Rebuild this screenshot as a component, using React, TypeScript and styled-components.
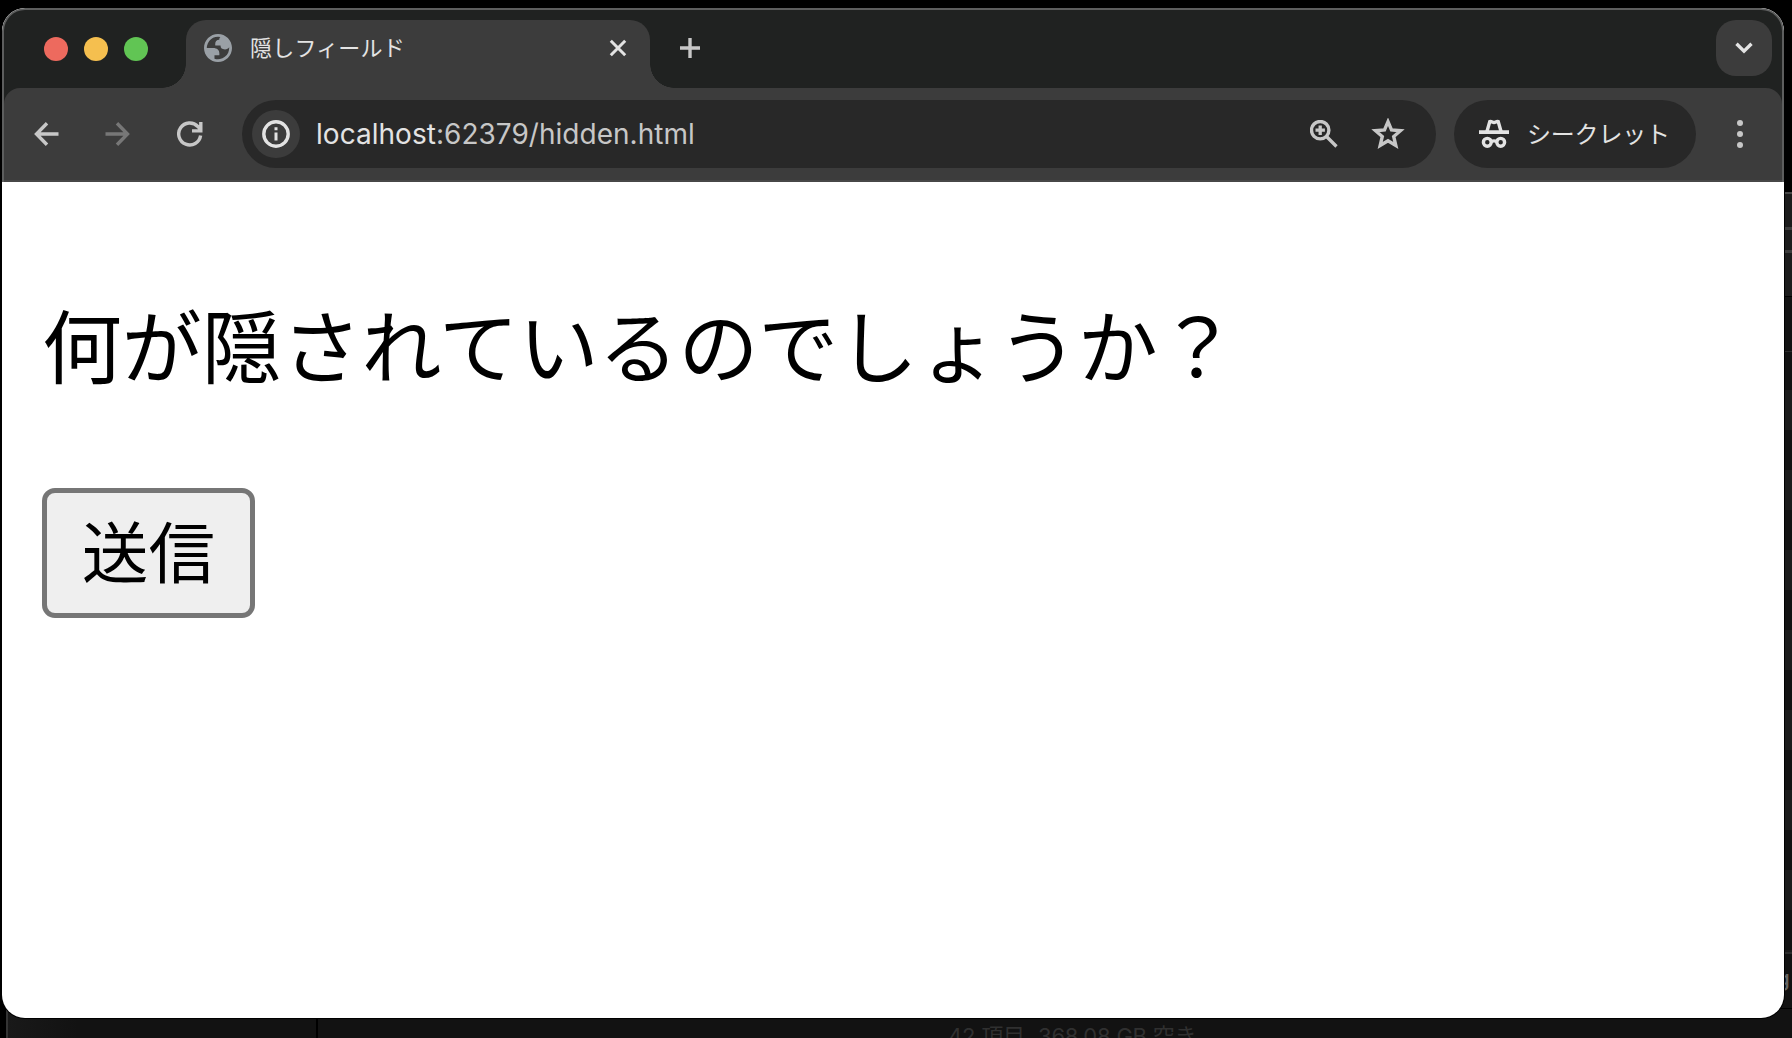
import React from 'react';
import styled, { createGlobalStyle } from 'styled-components';

const jp = `"Noto Sans CJK JP", sans-serif`;

const GlobalStyle = createGlobalStyle`
  * { box-sizing: border-box; }
  body { margin: 0; background: #000; overflow: hidden; }
`;

const Desktop = styled.div`
  position: relative;
  width: 1792px;
  height: 1038px;
  overflow: hidden;
  background: #000;
`;

/* Finder window that peeks out behind the browser */
const FinderWindow = styled.section`
  position: absolute;
  left: 6px;
  top: 192px;
  width: 1800px;
  height: 860px;
  display: grid;
  grid-template-columns: 310px 1fr;
  border-left: 2px solid #343434;
  border-top: 2px solid #474747;
  background: #121212;
`;

const FinderSidebar = styled.div`
  border-right: 2px solid #000;
  background: linear-gradient(90deg, #191919, #121212 70px);
`;

const FinderMain = styled.div`
  display: flex;
  flex-direction: column;
`;

const FinderToolbar = styled.div`
  height: 103px;
  background: #1b1b1b;
  border-bottom: 1px solid #000;
  display: flex;
  justify-content: flex-end;
  padding-top: 33px;
`;

const FinderSearch = styled.div`
  width: 60px;
  height: 26px;
  border: 3px solid #3b3b3b;
  border-width: 3px 0;
`;

const FinderHeader = styled.div`
  height: 55px;
  border-bottom: 1px solid #2c2c2c;
`;

const FinderRows = styled.div`
  height: 600px;
  background: repeating-linear-gradient(#121212 0 38px, #1b1b1b 38px 78px, #121212 78px 80px);
`;

const FinderPath = styled.div`
  height: 57px;
  border-top: 2px solid #2c2c2c;
  border-bottom: 1px solid #000;
  display: flex;
  justify-content: flex-end;
  align-items: center;
  padding: 0 16px 6px 0;
  color: #666;
  font: 500 22px/1 Inter, sans-serif;
`;

const FinderStatus = styled.div`
  flex: 1;
  padding: 15px 0 0 630px;
  background: #121212;
  color: #303030;
  font: 400 22px/24px Inter, ${jp};
  letter-spacing: -0.2px;
  white-space: nowrap;
`;

const Count = styled.span`
  display: inline-block;
  width: 90px;
  white-space: nowrap;
`;

const BrowserWindow = styled.main`
  position: absolute;
  left: 2px;
  top: 8px;
  width: 1782px;
  height: 1010px;
  display: flex;
  flex-direction: column;
  border-radius: 23px;
  overflow: hidden;
  background: #fff;
  box-shadow: 0 0 0 1px #000;
`;

const Chrome = styled.header`
  height: 174px;
  background: #202221;
  border: 2px solid #5d5e5e;
  border-bottom: 0;
  border-radius: 23px 23px 0 0;
`;

const TabStrip = styled.div`
  height: 78px;
  display: flex;
  padding: 10px 10px 0 40px;
`;

const Lights = styled.div`
  display: flex;
  gap: 16px;
  padding-top: 17px;
  width: 142px;
`;

const Light = styled.span<{ $color: string }>`
  width: 24px;
  height: 24px;
  border-radius: 50%;
  background: ${(p) => p.$color};
`;

const Tab = styled.div`
  position: relative;
  width: 464px;
  height: 68px;
  display: flex;
  align-items: center;
  padding: 0 22px 12px 18px;
  border-radius: 20px 20px 0 0;
  background: #3c3c3c;

  &::before,
  &::after {
    content: '';
    position: absolute;
    bottom: 0;
    width: 24px;
    height: 24px;
  }
  &::before {
    right: 100%;
    background: radial-gradient(circle at 0 0, transparent 23.5px, #3c3c3c 24px);
  }
  &::after {
    left: 100%;
    background: radial-gradient(circle at 100% 0, transparent 23.5px, #3c3c3c 24px);
  }
`;

const TabTitle = styled.span`
  flex: 1;
  margin-left: 18px;
  padding-bottom: 5px;
  color: #e3e3e3;
  font: 400 22px/30px ${jp};
  letter-spacing: 0.2px;
`;

const NewTab = styled.button`
  width: 80px;
  height: 56px;
  padding: 0;
  border: 0;
  background: none;
  display: grid;
  place-items: center;
`;

const TabSearch = styled.button`
  width: 56px;
  height: 56px;
  margin-left: auto;
  padding: 0;
  border: 0;
  border-radius: 20px;
  background: #3c3c3c;
  display: grid;
  place-items: center;
`;

const Toolbar = styled.nav`
  height: 94px;
  display: flex;
  align-items: flex-start;
  padding: 12px 0 0 6px;
  border-bottom: 2px solid #474747;
  border-radius: 16px 16px 0 0;
  background: #3c3c3c;
`;

const IconButton = styled.button<{ $width?: number }>`
  flex: none;
  width: ${(p) => p.$width ?? 72}px;
  height: 68px;
  padding: 0;
  border: 0;
  background: none;
  display: grid;
  place-items: center;
`;

const Omnibox = styled.div`
  flex: none;
  width: 1194px;
  height: 68px;
  margin-left: 16px;
  display: flex;
  align-items: center;
  padding: 0 16px 0 10px;
  border-radius: 34px;
  background: #282828;
`;

const SiteInfo = styled.span`
  width: 48px;
  height: 48px;
  border-radius: 50%;
  background: #3c3c3c;
  display: grid;
  place-items: center;
`;

const Url = styled.span`
  flex: 1;
  margin-left: 16px;
  color: #c7c7c7;
  font: 400 28px/36px Inter, sans-serif;
  letter-spacing: 0.03px;
`;

const Host = styled.span`
  color: #e3e3e3;
`;

const Incognito = styled.div`
  flex: none;
  width: 242px;
  height: 68px;
  margin-left: 18px;
  display: flex;
  align-items: center;
  padding-left: 25px;
  border-radius: 34px;
  background: #282828;
`;

const IncognitoLabel = styled.span`
  margin-left: 18px;
  padding-bottom: 2px;
  color: #e3e3e3;
  font: 400 24px/34px ${jp};
  letter-spacing: -0.2px;
`;

const Page = styled.article`
  flex: 1;
  padding: 100px 40px 0;
  color: #000;
`;

const Question = styled.p`
  margin: 0;
  font: 400 80px/120px ${jp};
  letter-spacing: -0.15px;
  white-space: nowrap;
`;

const Submit = styled.button`
  display: block;
  width: 213px;
  height: 130px;
  margin-top: 86px;
  padding: 0 0 8px;
  border: 5px solid #767676;
  border-radius: 13px;
  background: #efefef;
  color: #000;
  font: 400 66.67px/100px ${jp};
`;

const Glyph = styled.svg`
  display: block;
  fill: none;
  stroke: ${(p) => p.color ?? '#c7c7c7'};
  stroke-width: 3.4;
`;

const Globe = () => (
  <svg width="28" height="28" viewBox="2 2 20 20">
    <path
      fill="#9aa0a6"
      fillRule="evenodd"
      d="M12 2C6.480 2 2 6.480 2 12s4.480 10 10 10 10-4.480 10-10S17.520 2 12 2zM4 12h4.400c3.407.022 4.922 1.730 4.543 5.127H9.488v2.470a8.004 8.004 0 0 0 10.498-8.080C19.327 12.509 18.332 13 17 13c-2.137 0-3.206-.916-3.206-2.750h-3.748c-.274-2.728.683-4.092 2.870-4.092 0-.975.327-1.597.811-1.970A8.004 8.004 0 0 0 4 12z"
    />
  </svg>
);

const CloseIcon = () => (
  <Glyph width="20" height="20" viewBox="0 0 20 20" color="#e3e3e3">
    <path d="M2.800 2.800l14.400 14.400M17.200 2.800L2.800 17.200" strokeWidth="3" />
  </Glyph>
);

const PlusIcon = () => (
  <Glyph width="20" height="20" viewBox="0 0 20 20">
    <path d="M10 0v20M0 10h20" />
  </Glyph>
);

const ChevronIcon = () => (
  <Glyph width="18" height="12" viewBox="0 0 18 12" color="#e3e3e3">
    <path d="M1.500 1.700L9 9.200l7.500-7.500" />
  </Glyph>
);

const ArrowIcon = ({ forward }: { forward?: boolean }) => (
  <Glyph width="26" height="24" viewBox="0 0 26 24" color={forward ? '#777' : '#c7c7c7'}>
    <path d={forward ? 'M.500 12h22M12 1.300L22.500 12 12 22.700' : 'M25.500 12H3.500M14 1.300L3.500 12 14 22.700'} />
  </Glyph>
);

const ReloadIcon = () => (
  <Glyph width="26" height="26" viewBox="0 0 26 26">
    <path d="M23.600 14.500A11 11 0 1 1 20.800 5.500L23 8M23.800 1v8.900H15" />
  </Glyph>
);

const InfoIcon = () => (
  <Glyph width="28" height="28" viewBox="0 0 28 28" color="#e3e3e3">
    <circle cx="14" cy="14" r="12.200" />
    <path d="M14 12.500v8M14 7.300v3" strokeWidth="3" />
  </Glyph>
);

const ZoomIcon = () => (
  <Glyph width="28" height="28" viewBox="0 0 28 28">
    <circle cx="10.200" cy="10.200" r="8.700" />
    <path d="M16.500 16.500l10 10M10.200 5.500v9.400M5.500 10.200h9.400" strokeWidth="3.300" />
  </Glyph>
);

const StarIcon = () => (
  <Glyph width="34" height="32" viewBox="0 0 34 32">
    <path d="M17 3.700l3.500 8.200 9 .8-6.800 5.800 2.100 8.900-7.800-4.700-7.800 4.700 2.100-8.900-6.800-5.800 9-.8z" />
  </Glyph>
);

const IncognitoIcon = () => (
  <Glyph width="30" height="30" viewBox="0 0 30 30" color="#e3e3e3">
    <path d="M0 13.200h30" strokeWidth="3.800" />
    <path d="M7.800 13l3-10.400c1.600-.7 2.700.9 4.200.9s2.600-1.600 4.200-.9l3 10.400" />
    <circle cx="8.300" cy="23.300" r="3.900" />
    <circle cx="21.700" cy="23.300" r="3.900" />
    <path d="M12 22.500q3-1.300 6 0" />
  </Glyph>
);

const MenuIcon = () => (
  <svg width="6" height="28" viewBox="0 0 6 28" fill="#c7c7c7">
    <circle cx="3" cy="3" r="3" />
    <circle cx="3" cy="14" r="3" />
    <circle cx="3" cy="25" r="3" />
  </svg>
);

export default function App() {
  return (
    <>
      <GlobalStyle />
      <Desktop lang="ja">
        <FinderWindow>
          <FinderSidebar />
          <FinderMain>
            <FinderToolbar>
              <FinderSearch />
            </FinderToolbar>
            <FinderHeader />
            <FinderRows />
            <FinderPath>g</FinderPath>
            <FinderStatus>
              <Count>42 項目、</Count>368.08 GB 空き
            </FinderStatus>
          </FinderMain>
        </FinderWindow>
        <BrowserWindow>
          <Chrome>
            <TabStrip>
              <Lights>
                <Light $color="#ed6a5e" />
                <Light $color="#f5bf4f" />
                <Light $color="#61c554" />
              </Lights>
              <Tab>
                <Globe />
                <TabTitle>隠しフィールド</TabTitle>
                <CloseIcon />
              </Tab>
              <NewTab aria-label="新しいタブ">
                <PlusIcon />
              </NewTab>
              <TabSearch>
                <ChevronIcon />
              </TabSearch>
            </TabStrip>
            <Toolbar>
              <IconButton>
                <ArrowIcon />
              </IconButton>
              <IconButton>
                <ArrowIcon forward />
              </IconButton>
              <IconButton>
                <ReloadIcon />
              </IconButton>
              <Omnibox>
                <SiteInfo>
                  <InfoIcon />
                </SiteInfo>
                <Url>
                  <Host>localhost</Host>:62379/hidden.html
                </Url>
                <IconButton $width={64}>
                  <ZoomIcon />
                </IconButton>
                <IconButton $width={64}>
                  <StarIcon />
                </IconButton>
              </Omnibox>
              <Incognito>
                <IncognitoIcon />
                <IncognitoLabel>シークレット</IncognitoLabel>
              </Incognito>
              <IconButton $width={88}>
                <MenuIcon />
              </IconButton>
            </Toolbar>
          </Chrome>
          <Page>
            <Question>何が隠されているのでしょうか？</Question>
            <Submit>送信</Submit>
          </Page>
        </BrowserWindow>
      </Desktop>
    </>
  );
}
